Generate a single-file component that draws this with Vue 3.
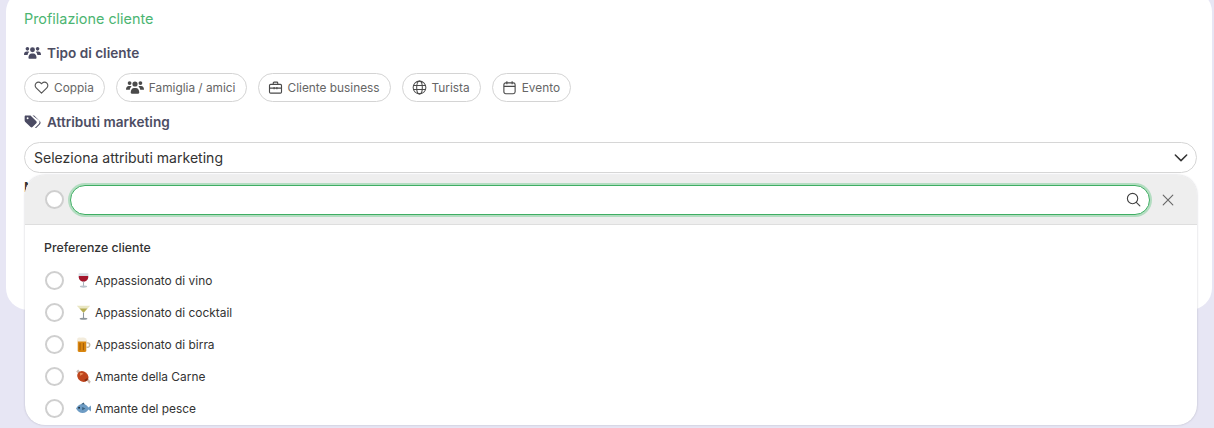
<script setup>
import { ref } from 'vue';

const chips = [
  { id: 'heart', label: 'Coppia' },
  { id: 'users', label: 'Famiglia / amici' },
  { id: 'case', label: 'Cliente business' },
  { id: 'globe', label: 'Turista' },
  { id: 'cal', label: 'Evento' },
];

const prefs = ref([
  { id: 'wine', label: 'Appassionato di vino' },
  { id: 'cocktail', label: 'Appassionato di cocktail' },
  { id: 'beer', label: 'Appassionato di birra' },
  { id: 'meat', label: 'Amante della Carne' },
  { id: 'fish', label: 'Amante del pesce' },
]);
</script>

<template>
  <div class="page">
    <section class="card">
      <h2 class="title">Profilazione cliente</h2>

      <div class="label">
        <svg class="label-icon" viewBox="0 0 16 13" fill="#4a4a62">
          <circle cx="3.2" cy="2.6" r="1.7" /><circle cx="12.8" cy="2.6" r="1.7" /><circle cx="8" cy="3.4" r="2.3" />
          <path d="M0 8.2C0 6.3 1 5.2 2.5 5.2h1.3c.4 0 .8.1 1.1.3-.9.7-1.4 1.7-1.5 2.9H.2C.1 8.4 0 8.3 0 8.2zM16 8.2c0-1.900-1-3-2.500-3h-1.300c-.4 0-.8.1-1.100.3.900.7 1.400 1.700 1.500 2.900h3.200c.1 0 .2-.1.200-.2zM4.200 11c0-2.200 1.300-4 3-4h1.600c1.700 0 3 1.800 3 4 0 .6-.4 1-.9 1H5.100c-.5 0-.9-.4-.9-1z" />
        </svg>
        <span>Tipo di cliente</span>
      </div>

      <div class="chips">
        <button v-for="c in chips" :key="c.id" class="chip" type="button">
          <svg v-if="c.id === 'heart'" class="chip-icon" viewBox="0 0 16 16" fill="none" stroke="#555" stroke-width="1.2">
            <path d="M8 14 2.300 8.300a3.500 3.500 0 0 1 0-5 3.500 3.500 0 0 1 5 0l.7.700.7-.7a3.500 3.500 0 0 1 5 0 3.500 3.500 0 0 1 0 5z" stroke-linejoin="round" />
          </svg>
          <svg v-else-if="c.id === 'users'" class="chip-icon wide" viewBox="0 0 16 13" fill="#4a4a4a">
            <circle cx="3.2" cy="2.6" r="1.7" /><circle cx="12.8" cy="2.6" r="1.7" /><circle cx="8" cy="3.4" r="2.3" />
            <path d="M0 8.2C0 6.3 1 5.2 2.5 5.2h1.3c.4 0 .8.1 1.1.3-.9.7-1.4 1.7-1.5 2.9H.2C.1 8.4 0 8.3 0 8.2zM16 8.2c0-1.900-1-3-2.500-3h-1.300c-.4 0-.8.1-1.100.3.900.7 1.400 1.700 1.500 2.900h3.200c.1 0 .2-.1.200-.2zM4.200 11c0-2.200 1.300-4 3-4h1.600c1.700 0 3 1.800 3 4 0 .6-.4 1-.9 1H5.100c-.5 0-.9-.4-.9-1z" />
          </svg>
          <svg v-else-if="c.id === 'case'" class="chip-icon" viewBox="0 0 16 16" fill="none" stroke="#4a4a4a" stroke-width="1.2">
            <rect x="1.600" y="4.600" width="12.800" height="9.400" rx="1.200" />
            <path d="M5.600 4.600V3.200c0-.5.400-.9.900-.9h3c.5 0 .9.400.9.900v1.400M1.600 8.600h12.800M6.500 7.400v2.400M9.500 7.400v2.400" />
          </svg>
          <svg v-else-if="c.id === 'globe'" class="chip-icon" viewBox="0 0 16 16" fill="none" stroke="#4a4a4a" stroke-width="1.1">
            <circle cx="8" cy="8" r="6.800" />
            <ellipse cx="8" cy="8" rx="3" ry="6.800" />
            <path d="M1.600 5.800h12.800M1.600 10.200h12.800" />
          </svg>
          <svg v-else class="chip-icon" viewBox="0 0 16 16" fill="none" stroke="#4a4a4a" stroke-width="1.2">
            <rect x="2" y="3" width="12" height="11.600" rx="2" />
            <path d="M2 6.800h12M5.200 1.200v3.200M10.800 1.200v3.200" />
          </svg>
          <span>{{ c.label }}</span>
        </button>
      </div>

      <div class="label label-second">
        <svg class="label-icon tag" viewBox="0 0 16 13" fill="#4a4a62">
          <path d="M.6 1.400C.6.800 1 .4 1.600.4h4c.4 0 .8.100 1 .4l5 5c.5.500.5 1.300 0 1.800l-3.600 3.600c-.5.500-1.300.5-1.800 0l-5.200-5c-.3-.2-.4-.6-.4-1z" />
          <path d="M8 .4h1c.4 0 .7.100 1 .4l5 4.900c.8.800.8 2.100 0 2.900l-3.300 3.300c-.4.400-1 .4-1.300 0l3.500-3.600c1-1 1-2.500 0-3.400z" />
          <circle cx="3.400" cy="3" r=".9" fill="#fff" />
        </svg>
        <span>Attributi marketing</span>
      </div>

      <div class="select-wrap">
        <div class="select">
          <span>Seleziona attributi marketing</span>
          <svg class="chev" viewBox="0 0 16 16" fill="none" stroke="#333" stroke-width="1.7" stroke-linecap="round" stroke-linejoin="round">
            <path d="M1.500 4.500 8 11l6.500-6.500" />
          </svg>
        </div>

        <div class="dropdown">
          <div class="drop-head">
            <span class="radio"></span>
            <div class="search">
              <svg class="search-icon" viewBox="0 0 16 16" fill="none" stroke="#444" stroke-width="1.2" stroke-linecap="round">
                <circle cx="7" cy="7" r="5.500" /><path d="m11 11 3.800 3.800" />
              </svg>
            </div>
            <svg class="close" viewBox="0 0 16 16" fill="none" stroke="#666" stroke-width="1.3" stroke-linecap="round">
              <path d="m2.500 2.500 11 11M13.500 2.500l-11 11" />
            </svg>
          </div>
          <div class="drop-body">
            <div class="group-title">Preferenze cliente</div>
            <div v-for="p in prefs" :key="p.id" class="row">
              <span class="radio"></span>
              <svg v-if="p.id === 'wine'" class="emoji" viewBox="0 0 14 14">
                <path d="M2.600 .3h8.800c.6 3.800.2 7.200-4.400 7.800C2.400 7.500 2 4.100 2.600 .3z" fill="#d5dbe2" />
                <path d="M2.600 2.700h8.800c.2 2.900-1 4.900-4.400 5.400-3.400-.5-4.600-2.500-4.400-5.400z" fill="#a3152b" />
                <path d="M6.500 8h1v4.300h-1z" fill="#aab4bd" /><ellipse cx="7" cy="12.700" rx="3.400" ry="1" fill="#b9c3cb" />
              </svg>
              <svg v-else-if="p.id === 'cocktail'" class="emoji" viewBox="0 0 14 14">
                <path d="M.8.8h12.400L7 7.600z" fill="#e9e6c3" />
                <path d="M3.400 3.200h7.200L7 7.300z" fill="#b5ad52" />
                <path d="M6.500 7.200h1v5.200h-1z" fill="#8d969c" /><ellipse cx="7" cy="12.900" rx="3.600" ry=".9" fill="#8d969c" />
              </svg>
              <svg v-else-if="p.id === 'beer'" class="emoji" viewBox="0 0 14 14">
                <path d="M1.600 3h8v9.800c0 .7-.5 1.100-1.200 1.100H2.800c-.7 0-1.200-.4-1.200-1.100z" fill="#d9860f" />
                <path d="M9.600 4.800h1.500c1.500 0 2.400 1 2.400 2.500 0 1.700-1 3-2.600 3H9.600V8.900h1.300c.7 0 1.100-.6 1.100-1.500s-.4-1.300-1-1.300H9.600z" fill="#c5b9a4" />
                <path d="M1.200 1.600c1-1.300 2.400-1.200 3.400-.8 1.200-.7 3.400-.6 5.200.9V4.200H1.200z" fill="#f3ecdc" />
                <path d="M3.200 5.500h1.100v6.800H3.200zM6.400 5.500h1.100v6.800H6.400z" fill="#a85f08" />
              </svg>
              <svg v-else-if="p.id === 'meat'" class="emoji" viewBox="0 0 14 14">
                <path d="M.2 2.400 2 .4l2.200 2.400-1.800 1.800zM10 10.400l1.500-1.400 2.300 2.800-1.500 1.900z" fill="#c9b9b0" />
                <ellipse cx="6.400" cy="7" rx="5.600" ry="4.700" transform="rotate(40 6.400 7)" fill="#bf451d" />
                <path d="M3.600 4c1.300-.7 2.700-.4 3.500.6-1.200.1-2.300.8-3 2z" fill="#e98d58" />
                <path d="M7.500 10.200c1.300-.2 2.500-1 3-2.200l.5 1.600-1.800 1.800z" fill="#7d2a11" />
              </svg>
              <svg v-else class="emoji" viewBox="0 0 14 14">
                <path d="M0 7c1.700-3 3.800-4.300 6.200-4.300 2.500 0 4.300 1.500 5.500 3.300l2.100-1.900c.3 1.900.3 3.800 0 5.700l-2.100-1.900c-1.200 1.800-3 3.300-5.500 3.300C3.800 11.200 1.700 10 0 7z" fill="#6e9cc4" />
                <path d="M4.600 3 7 1.300l1.300 1.900zM5.800 5.500 8.800 7l-3 1.700z" fill="#39617f" />
                <circle cx="2.900" cy="6.300" r=".9" fill="#1d2b36" />
              </svg>
              <span>{{ p.label }}</span>
            </div>
          </div>
        </div>
      </div>

      <div class="label label-hidden"><span>Note</span></div>
    </section>
  </div>
</template>

<style scoped>
.page {
  height: 428px;
  overflow: hidden;
  padding: 0 2px 0 6px;
  box-sizing: border-box;
  background: #e7e6f4;
  font-family: Inter, "Liberation Sans", sans-serif;
}

.card {
  height: 320px;
  margin-top: -10px;
  box-sizing: border-box;
  padding: 20px 15px 0 18px;
  background: #fff;
  border-radius: 22px;
}

.title {
  margin: 0;
  font-size: 14.4px;
  line-height: 17px;
  font-weight: 400;
  color: #4cb572;
}

.label {
  display: flex;
  align-items: center;
  gap: 6px;
  margin-top: 17px;
  height: 18px;
  font-size: 13.6px;
  font-weight: 600;
  color: #4d4d63;
}

.label-icon {
  width: 17px;
  height: 14px;
}

.label-second {
  margin-top: 11px;
}

.label-hidden {
  margin-top: 5px;
  color: #333;
}

.chips {
  display: flex;
  gap: 11px;
  margin-top: 11px;
}

.chip {
  display: flex;
  align-items: center;
  gap: 5px;
  height: 29px;
  padding: 0 10px 0 9px;
  box-sizing: border-box;
  border: 1px solid #d4d4d4;
  border-radius: 15px;
  background: #fff;
  font-family: inherit;
  font-size: 11.85px;
  color: #666;
}

.chip-icon {
  width: 15px;
  height: 15px;
}

.chip-icon.wide {
  width: 18px;
}

.select-wrap {
  position: relative;
  margin-top: 11px;
}

.select {
  display: flex;
  align-items: center;
  justify-content: space-between;
  height: 31px;
  box-sizing: border-box;
  padding: 0 8px 0 9px;
  border: 1px solid #d6d6d6;
  border-radius: 16px;
  font-size: 14.05px;
  color: #333;
}

.chev {
  width: 14px;
  height: 14px;
}

.dropdown {
  position: absolute;
  top: 33px;
  left: 1px;
  right: 0;
  height: 250px;
  border-radius: 20px;
  background: #fff;
  overflow: hidden;
  box-shadow: 0 0 2px rgba(60, 60, 80, 0.3);
  z-index: 2;
}

.drop-head {
  display: flex;
  align-items: center;
  height: 50px;
  box-sizing: border-box;
  padding: 0 22px 0 20px;
  background: #eeeeee;
  border-bottom: 1px solid #dedede;
}

.radio {
  flex: none;
  width: 19px;
  height: 19px;
  box-sizing: border-box;
  border: 2px solid #cfcfcf;
  border-radius: 50%;
  background: #fff;
}

.search {
  flex: 1;
  display: flex;
  align-items: center;
  justify-content: flex-end;
  height: 30px;
  margin: 0 11px 0 6px;
  box-sizing: border-box;
  padding-right: 8px;
  background: #fff;
  border: 1px solid #3fae63;
  border-radius: 15px;
  box-shadow: 0 0 0 2px rgba(69, 190, 110, 0.35);
}

.search-icon {
  width: 15px;
  height: 15px;
}

.close {
  flex: none;
  width: 14px;
  height: 14px;
}

.drop-body {
  padding: 0 19px;
}

.group-title {
  height: 39px;
  box-sizing: border-box;
  padding-top: 15px;
  line-height: 16px;
  font-size: 12.3px;
  font-weight: 500;
  color: #333;
}

.row {
  display: flex;
  align-items: center;
  height: 32px;
  padding-left: 1px;
  font-size: 11.9px;
  color: #333;
}

.emoji {
  width: 15px;
  height: 15px;
  margin: 0 4px 0 12px;
}
</style>

<style>
html, body {
  background: #e7e6f4;
}
</style>
